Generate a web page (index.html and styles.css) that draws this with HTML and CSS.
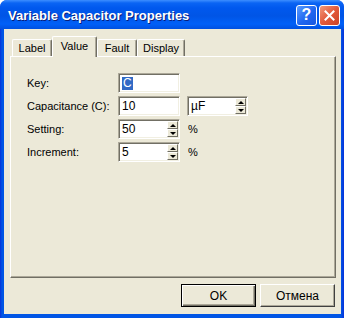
FILE: index.html
```html
<!DOCTYPE html>
<html lang="en">

<head>
    <meta charset="UTF-8">
    <title>Variable Capacitor Properties</title>
    <link rel="stylesheet" href="styles.css">
</head>

<body>
    <div class="window">
        <div class="titlebar">
            <span class="title">Variable Capacitor Properties</span>
            <div class="caption-btns">
                <div class="cap-btn help">?</div>
                <div class="cap-btn close">
                    <svg width="11" height="11" viewBox="0 0 11 11">
                        <path d="M1.5 1.5 L9.5 9.5 M9.5 1.5 L1.5 9.5" stroke="#fff" stroke-width="2" stroke-linecap="square" />
                    </svg>
                </div>
            </div>
        </div>

        <div class="client">
            <div class="tabs">
                <div class="tab">Label</div>
                <div class="tab active">Value</div>
                <div class="tab">Fault</div>
                <div class="tab">Display</div>
            </div>

            <div class="panel">
                <div class="form">
                    <span class="lbl">Key:</span>
                    <div class="field"><span class="sel">C</span></div>
                    <span></span>

                    <span class="lbl">Capacitance (C):</span>
                    <div class="field">10</div>
                    <div class="field unit">µF
                        <div class="spin"><span class="up"></span><span class="down"></span></div>
                    </div>

                    <span class="lbl">Setting:</span>
                    <div class="field">50
                        <div class="spin"><span class="up"></span><span class="down"></span></div>
                    </div>
                    <span class="pct">%</span>

                    <span class="lbl">Increment:</span>
                    <div class="field">5
                        <div class="spin"><span class="up"></span><span class="down"></span></div>
                    </div>
                    <span class="pct">%</span>
                </div>
            </div>

            <div class="actions">
                <div class="btn default">OK</div>
                <div class="btn">Отмена</div>
            </div>
        </div>
    </div>
</body>

</html>
```

FILE: styles.css
```css
/* Basic Reset */
* {
    margin: 0;
    padding: 0;
    box-sizing: border-box;
}

body {
    background-color: #fff;
    font-family: "Liberation Sans", Arial, sans-serif;
    font-size: 11px;
    color: #000;
}

/* Window frame */
.window {
    width: 344px;
    height: 318px;
    display: flex;
    flex-direction: column;
    background: linear-gradient(to right, #0831d9 0, #0055e5 2px, #0055e5 341px, #0831d9 344px);
    border-radius: 7px 7px 0 0;
}

.titlebar {
    height: 29px;
    display: flex;
    align-items: center;
    justify-content: space-between;
    padding: 1px 4px 0 8px;
    border-radius: 7px 7px 0 0;
    background: linear-gradient(to bottom, #3d8eff 0, #0a64f4 3px, #0058ee 8px, #0055e6 16px, #0060f8 24px, #0050e0 29px);
}

.title {
    color: #fff;
    font-weight: bold;
    font-size: 13px;
    text-shadow: 1px 1px 0 #0a1e7a;
}

.caption-btns {
    display: flex;
    gap: 2px;
}

.cap-btn {
    width: 21px;
    height: 21px;
    border: 1px solid #fff;
    border-radius: 3px;
    display: flex;
    align-items: center;
    justify-content: center;
    color: #fff;
}

.cap-btn.help {
    background: linear-gradient(135deg, #5a9cff 0%, #1f66f0 55%, #1656e0 100%);
    font-weight: bold;
    font-size: 16px;
}

.cap-btn.close {
    background: linear-gradient(135deg, #f29a7c 0%, #e2593a 50%, #cc4426 100%);
}

/* Client area */
.client {
    flex: 1;
    display: flex;
    flex-direction: column;
    margin: 0 3px 4px 4px;
    padding: 7px 5px 7px 6px;
    background-color: #ece9d8;
}

/* Tabs */
.tabs {
    height: 20px;
    display: flex;
    align-items: flex-end;
    padding-left: 2px;
    position: relative;
    z-index: 1;
}

.tab {
    min-width: 40px;
    height: 17px;
    padding: 0 5px;
    display: flex;
    align-items: center;
    justify-content: center;
    border-top: 1px solid #fff;
    border-left: 1px solid #fff;
    border-right: 1px solid #716f64;
    box-shadow: inset -1px 0 0 #aca899;
    border-radius: 2px 2px 0 0;
}

.tab.active {
    min-width: 45px;
    height: 21px;
    margin-bottom: -1px;
    padding: 0 5px 3px;
    background-color: #ece9d8;
}

/* Tab panel */
.panel {
    flex: 1;
    padding: 16px 16px;
    border-top: 1px solid #fff;
    border-left: 1px solid #fff;
    border-right: 1px solid #716f64;
    border-bottom: 1px solid #716f64;
    box-shadow: inset -1px -1px 0 #aca899;
}

.form {
    display: grid;
    grid-template-columns: 91px 69px auto;
    grid-auto-rows: 20px;
    row-gap: 3px;
    align-items: center;
}

.lbl {
    white-space: nowrap;
}

/* Sunken edit fields */
.field {
    position: relative;
    width: 62px;
    height: 20px;
    display: flex;
    align-items: center;
    padding-left: 3px;
    font-size: 12px;
    background-color: #fff;
    border-top: 1px solid #aca899;
    border-left: 1px solid #aca899;
    border-right: 1px solid #fff;
    border-bottom: 1px solid #fff;
    box-shadow: inset 1px 1px 0 #716f64, inset -1px -1px 0 #f1efe2;
}

.field.unit {
    width: 61px;
}

.sel {
    background-color: #316ac5;
    color: #fff;
    line-height: 13px;
    padding: 0 1px;
}

.pct {
    padding-left: 1px;
}

/* Spin buttons */
.spin {
    position: absolute;
    top: 1px;
    right: 1px;
    bottom: 1px;
    width: 11px;
    display: flex;
    flex-direction: column;
}

.spin span {
    flex: 1;
    position: relative;
    background-color: #ece9d8;
    border-top: 1px solid #fff;
    border-left: 1px solid #fff;
    border-right: 1px solid #716f64;
    border-bottom: 1px solid #716f64;
}

.spin span::after {
    content: "";
    position: absolute;
    left: 2px;
    top: 2px;
    border-left: 3px solid transparent;
    border-right: 3px solid transparent;
}

.spin .up::after {
    border-bottom: 3px solid #000;
}

.spin .down::after {
    border-top: 3px solid #000;
}

/* Bottom buttons */
.actions {
    display: flex;
    justify-content: flex-end;
    gap: 4px;
    margin-top: 6px;
    padding-right: 1px;
}

.btn {
    width: 75px;
    height: 23px;
    display: flex;
    align-items: center;
    justify-content: center;
    font-size: 12px;
    background-color: #ece9d8;
    border-top: 1px solid #fff;
    border-left: 1px solid #fff;
    border-right: 1px solid #404040;
    border-bottom: 1px solid #404040;
    box-shadow: inset -1px -1px 0 #aca899;
}

.btn.default {
    border: 1px solid #000;
    box-shadow: inset 1px 1px 0 #fff, inset -1px -1px 0 #716f64, inset -2px -2px 0 #aca899;
}
```
